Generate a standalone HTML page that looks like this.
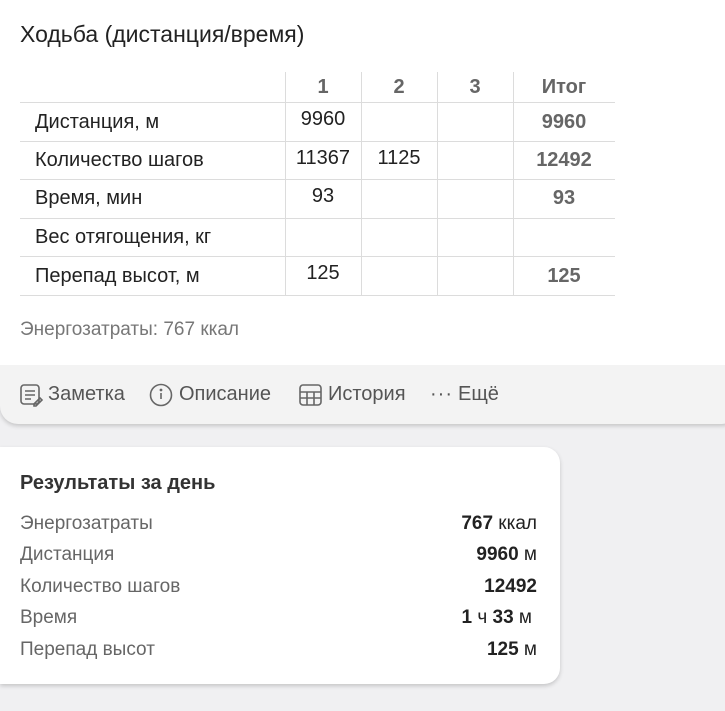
<!DOCTYPE html>
<html><head><meta charset="utf-8"><style>
body{margin:0;width:725px;height:711px;background:#f0f0f2;font-family:"Liberation Sans",sans-serif;position:relative;overflow:hidden}
.a{position:absolute;white-space:nowrap}
.card{position:absolute;left:0;top:0;width:740px;height:424px;background:#f3f3f3;border-radius:0 0 18px 18px;box-shadow:0 2px 4px rgba(0,0,0,.18)}
.top{position:absolute;left:0;top:0;width:740px;height:365px;background:#fff}
.vl{position:absolute;top:72px;height:223px;width:1px;background:#dcdcdc}
.hl{position:absolute;left:20px;width:595px;height:1px;background:#dcdcdc}
.t{font-size:20px;color:#222}
.c{position:absolute;text-align:center;font-size:20px;color:#222}
.g{color:#666;font-weight:bold}
.s{position:absolute;left:0;top:447px;width:560px;height:237px;background:#fff;border-radius:0 16px 16px 0;box-shadow:0 2px 4px rgba(0,0,0,.18)}
.l{position:absolute;left:20px;font-size:19px;color:#666}
.r{position:absolute;right:188px;font-size:19px;color:#222}
.act{position:absolute;top:383px;font-size:20px;color:#555}
</style></head><body>
<div class="card"></div>
<div class="top"></div>
<div class="a" style="left:20px;top:21px;font-size:23px;color:#222">Ходьба (дистанция/время)</div>
<div class="vl" style="left:285px"></div><div class="vl" style="left:361px"></div><div class="vl" style="left:437px"></div><div class="vl" style="left:513px"></div>
<div class="hl" style="top:102px"></div><div class="hl" style="top:141px"></div><div class="hl" style="top:179px"></div><div class="hl" style="top:218px"></div><div class="hl" style="top:256px"></div><div class="hl" style="top:295px"></div>
<div class="c g" style="left:285px;width:76px;top:76px">1</div>
<div class="c g" style="left:361px;width:76px;top:76px">2</div>
<div class="c g" style="left:437px;width:76px;top:76px">3</div>
<div class="c g" style="left:513px;width:102px;top:76px">Итог</div>
<div class="a t" style="left:35px;top:111px">Дистанция, м</div>
<div class="a t" style="left:35px;top:149px">Количество шагов</div>
<div class="a t" style="left:35px;top:187px">Время, мин</div>
<div class="a t" style="left:35px;top:226px">Вес отягощения, кг</div>
<div class="a t" style="left:35px;top:265px">Перепад высот, м</div>
<div class="c" style="left:285px;width:76px;top:108px">9960</div>
<div class="c" style="left:285px;width:76px;top:147px">11367</div>
<div class="c" style="left:361px;width:76px;top:147px">1125</div>
<div class="c" style="left:285px;width:76px;top:185px">93</div>
<div class="c" style="left:285px;width:76px;top:262px">125</div>
<div class="c g" style="left:513px;width:102px;top:111px">9960</div>
<div class="c g" style="left:513px;width:102px;top:149px">12492</div>
<div class="c g" style="left:513px;width:102px;top:187px">93</div>
<div class="c g" style="left:513px;width:102px;top:265px">125</div>
<div class="a" style="left:20px;top:319px;font-size:19px;color:#777">Энергозатраты: 767 ккал</div>
<svg class="a" style="left:19px;top:383px" width="26" height="24" viewBox="0 0 26 24" fill="none" stroke="#666" stroke-width="1.6"><rect x="2" y="2" width="18" height="19" rx="3"/><path d="M6 8h10M6 12h10M6 16h6"/><path d="M15 21l6-6 2 2-6 6h-2z"/></svg>
<div class="act" style="left:48px">Заметка</div>
<svg class="a" style="left:149px;top:383px" width="26" height="24" viewBox="0 0 26 24" fill="none" stroke="#666" stroke-width="1.6"><circle cx="12" cy="12" r="10.5"/><path d="M12 10v6"/><circle cx="12" cy="7" r=".6" fill="#666"/></svg>
<div class="act" style="left:179px">Описание</div>
<svg class="a" style="left:298px;top:383px" width="26" height="24" viewBox="0 0 26 24" fill="none" stroke="#666" stroke-width="1.6"><rect x="2" y="2" width="21" height="20" rx="3"/><path d="M2 9h21M2 15h21M9 9v13M16 9v13"/></svg>
<div class="act" style="left:328px">История</div>
<div class="act" style="left:430px;letter-spacing:1px">···</div>
<div class="act" style="left:458px">Ещё</div>
<div class="s"></div>
<div class="a" style="left:20px;top:472px;font-size:20px;font-weight:bold;color:#333">Результаты за день</div>
<div class="l" style="top:513px">Энергозатраты</div><div class="r" style="top:513px"><b>767</b> ккал</div>
<div class="l" style="top:544px">Дистанция</div><div class="r" style="top:544px"><b>9960</b> м</div>
<div class="l" style="top:576px">Количество шагов</div><div class="r" style="top:576px"><b>12492</b></div>
<div class="l" style="top:607px">Время</div><div class="r" style="top:607px;right:193px"><b>1</b> ч <b>33</b> м</div>
<div class="l" style="top:639px">Перепад высот</div><div class="r" style="top:639px"><b>125</b> м</div>
</body></html>
